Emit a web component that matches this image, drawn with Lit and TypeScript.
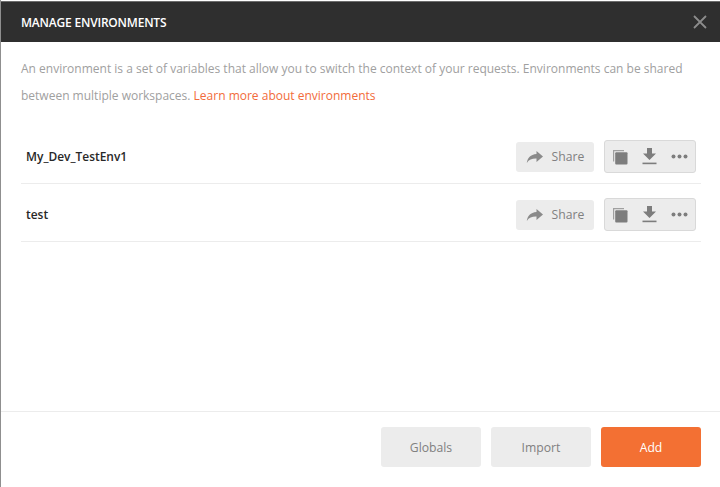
import { LitElement, html, css } from "lit";
import { customElement } from "lit/decorators.js";

const share = html`<svg width="18" height="14" viewBox="0 0 18 14"><path d="M10.5 1 L17 6.6 L10.5 12 V8.6 C6.5 8.4 3 9.5 .8 13 C1.5 8 4.5 4.6 10.5 4 Z" fill="#8a8a8a"/></svg>`;
const copy = html`<svg width="16" height="16" viewBox="0 0 16 16"><path d="M1 12.5 V1 H12 V2.2 H2.2 V12.5 Z" fill="#a0a0a0"/><rect x="3.2" y="3.2" width="12.3" height="12.3" rx="1" fill="#7d7d7d"/></svg>`;
const download = html`<svg width="15" height="17" viewBox="0 0 15 17"><path d="M5 0 H10 V5.5 H14 L7.5 12 L1 5.5 H5 Z" fill="#7d7d7d"/><rect x="0.5" y="14.6" width="14" height="1.6" fill="#7d7d7d"/></svg>`;
const dots = html`<svg width="17" height="5" viewBox="0 0 17 5"><circle cx="2.5" cy="2.5" r="2" fill="#7d7d7d"/><circle cx="8.5" cy="2.5" r="2" fill="#7d7d7d"/><circle cx="14.5" cy="2.5" r="2" fill="#7d7d7d"/></svg>`;

@customElement("app-root")
export class AppRoot extends LitElement {
  static styles = css`
    :host { display: block; width: 720px; height: 487px; font-family: "Open Sans", "Noto Sans", sans-serif; background: #fff; overflow: hidden; }
    .frame { height: 487px; display: flex; flex-direction: column; box-sizing: border-box; padding-top: 1px; background: #fff; border-left: 1px solid #8f8f8f; }
    .head { height: 41px; flex: none; background: #2f2f2f; border-top: 1px solid #6d6d6d; box-sizing: border-box; display: flex; align-items: center; justify-content: space-between; padding: 0 13px 0 20px; color: #fff; font-size: 12px; font-weight: 600; }
    .title { letter-spacing: -0.2px; }
    .desc { padding: 13px 20px 0; font-size: 12px; line-height: 27px; color: #a0a0a0; height: 84px; box-sizing: border-box; flex: none; white-space: nowrap; }
    .desc a { color: #f26b3a; }
    .list { margin: 0 19px 0 20px; flex: 1; }
    .row { height: 58px; box-sizing: border-box; border-bottom: 1px solid #ececec; display: flex; align-items: center; padding: 4px 5px 0; gap: 10px; }
    .name { flex: 1; font-size: 11.95px; font-weight: 600; color: #282828; }
    .share { width: 78px; height: 30px; background: #ececec; border-radius: 3px; display: flex; align-items: center; justify-content: center; gap: 8px; color: #808080; font-size: 12.2px; }
    .group { width: 92px; height: 33px; box-sizing: border-box; background: #ececec; border: 1px solid #d9d9d9; border-radius: 3px; display: flex; align-items: center; justify-content: space-between; padding: 0 7px 0 7px; }
    .foot { height: 76px; flex: none; border-top: 1px solid #ececec; display: flex; justify-content: flex-end; align-items: flex-start; gap: 10px; padding: 15px 19px 0 0; box-sizing: border-box; }
    .btn { width: 100px; height: 40px; border-radius: 3px; background: #ececec; color: #808080; font-size: 12.2px; font-weight: 500; display: flex; align-items: center; justify-content: center; }
    .btn.primary { background: #f37033; color: #fff; }
  `;

  private row(name: string) {
    return html`<div class="row">
      <div class="name">${name}</div>
      <div class="share">${share}<span>Share</span></div>
      <div class="group">${copy}${download}${dots}</div>
    </div>`;
  }

  render() {
    return html`<div class="frame">
      <div class="head">
        <span class="title">MANAGE ENVIRONMENTS</span>
        <svg width="14" height="14" viewBox="0 0 14 14"><path d="M1 1 L13 13 M13 1 L1 13" stroke="#8c8c8c" stroke-width="1.8" fill="none"/></svg>
      </div>
      <div class="desc">
        <div>An environment is a set of variables that allow you to switch the context of your requests. Environments can be shared</div>
        <div>between multiple workspaces. <a>Learn more about environments</a></div>
      </div>
      <div class="list">${this.row("My_Dev_TestEnv1")}${this.row("test")}</div>
      <div class="foot">
        <div class="btn">Globals</div>
        <div class="btn">Import</div>
        <div class="btn primary">Add</div>
      </div>
    </div>`;
  }
}
